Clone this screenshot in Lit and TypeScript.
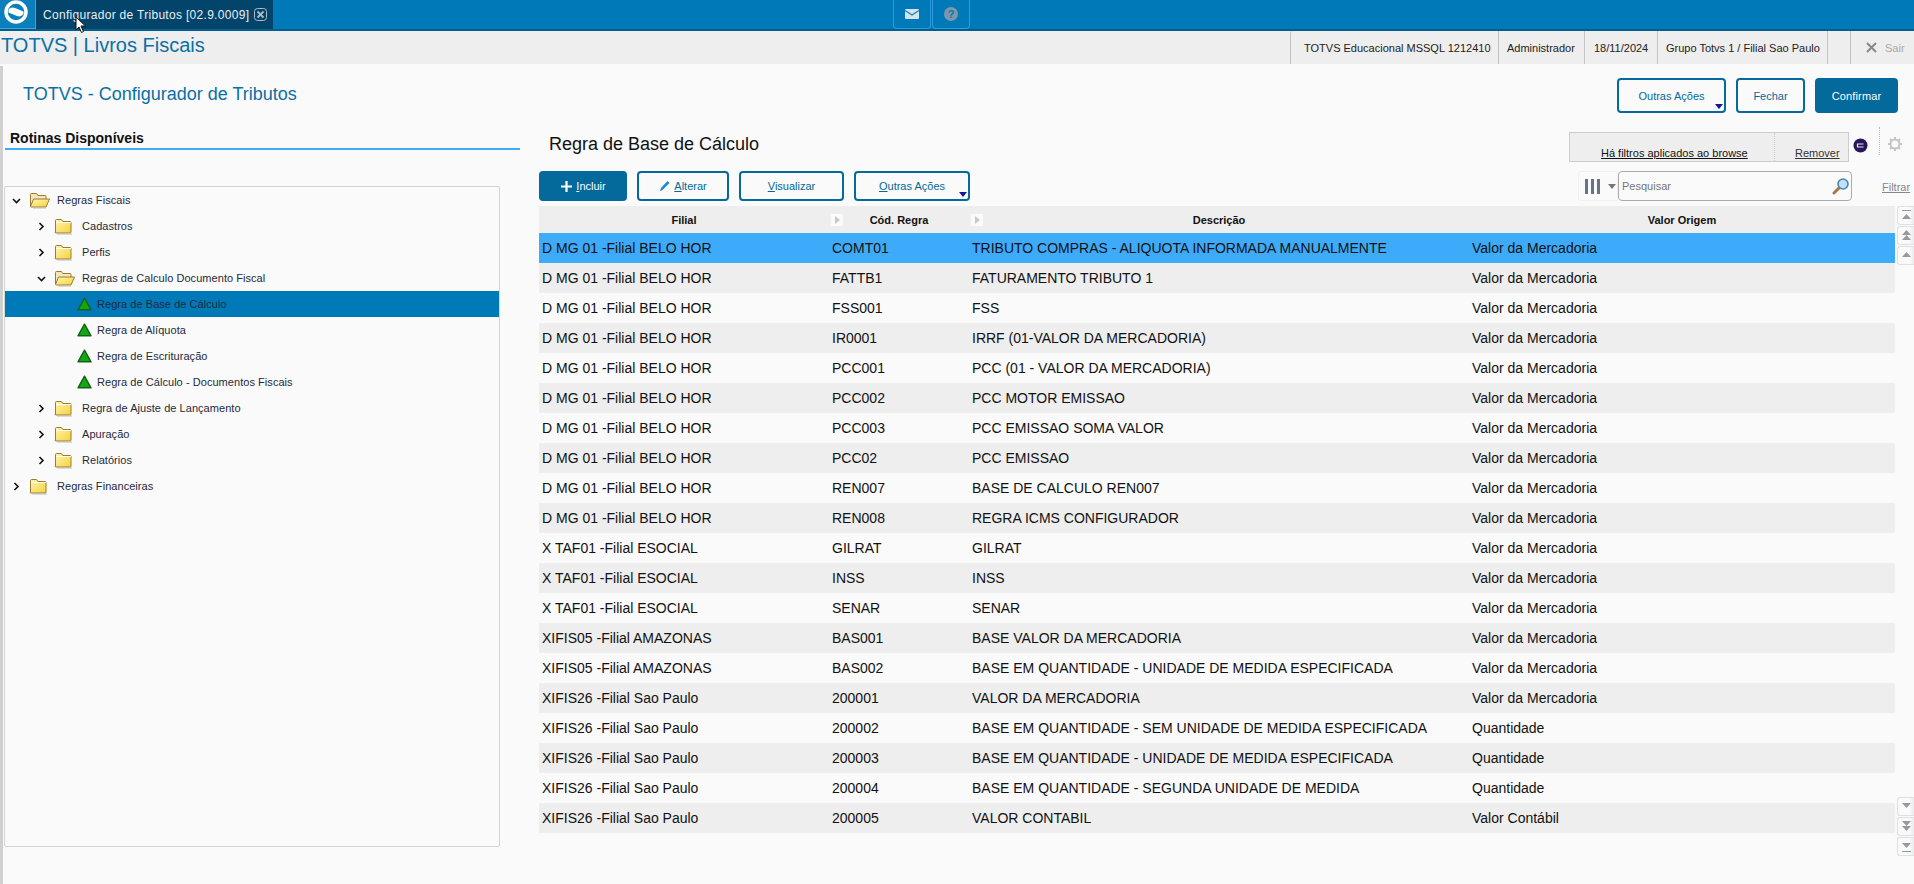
import { LitElement, html, css, svg } from "lit";
import { customElement } from "lit/decorators.js";

const rows: [string, string, string, string][] = [
  ["D MG 01 -Filial BELO HOR", "COMT01", "TRIBUTO COMPRAS - ALIQUOTA INFORMADA MANUALMENTE", "Valor da Mercadoria"],
  ["D MG 01 -Filial BELO HOR", "FATTB1", "FATURAMENTO TRIBUTO 1", "Valor da Mercadoria"],
  ["D MG 01 -Filial BELO HOR", "FSS001", "FSS", "Valor da Mercadoria"],
  ["D MG 01 -Filial BELO HOR", "IR0001", "IRRF (01-VALOR DA MERCADORIA)", "Valor da Mercadoria"],
  ["D MG 01 -Filial BELO HOR", "PCC001", "PCC (01 - VALOR DA MERCADORIA)", "Valor da Mercadoria"],
  ["D MG 01 -Filial BELO HOR", "PCC002", "PCC MOTOR EMISSAO", "Valor da Mercadoria"],
  ["D MG 01 -Filial BELO HOR", "PCC003", "PCC EMISSAO SOMA VALOR", "Valor da Mercadoria"],
  ["D MG 01 -Filial BELO HOR", "PCC02", "PCC EMISSAO", "Valor da Mercadoria"],
  ["D MG 01 -Filial BELO HOR", "REN007", "BASE DE CALCULO REN007", "Valor da Mercadoria"],
  ["D MG 01 -Filial BELO HOR", "REN008", "REGRA ICMS CONFIGURADOR", "Valor da Mercadoria"],
  ["X TAF01 -Filial ESOCIAL", "GILRAT", "GILRAT", "Valor da Mercadoria"],
  ["X TAF01 -Filial ESOCIAL", "INSS", "INSS", "Valor da Mercadoria"],
  ["X TAF01 -Filial ESOCIAL", "SENAR", "SENAR", "Valor da Mercadoria"],
  ["XIFIS05 -Filial AMAZONAS", "BAS001", "BASE VALOR DA MERCADORIA", "Valor da Mercadoria"],
  ["XIFIS05 -Filial AMAZONAS", "BAS002", "BASE EM QUANTIDADE - UNIDADE DE MEDIDA ESPECIFICADA", "Valor da Mercadoria"],
  ["XIFIS26 -Filial Sao Paulo", "200001", "VALOR DA MERCADORIA", "Valor da Mercadoria"],
  ["XIFIS26 -Filial Sao Paulo", "200002", "BASE EM QUANTIDADE - SEM UNIDADE DE MEDIDA ESPECIFICADA", "Quantidade"],
  ["XIFIS26 -Filial Sao Paulo", "200003", "BASE EM QUANTIDADE - UNIDADE DE MEDIDA ESPECIFICADA", "Quantidade"],
  ["XIFIS26 -Filial Sao Paulo", "200004", "BASE EM QUANTIDADE - SEGUNDA UNIDADE DE MEDIDA", "Quantidade"],
  ["XIFIS26 -Filial Sao Paulo", "200005", "VALOR CONTABIL", "Valor Contábil"],
];

type Kind = "closed" | "open" | "leaf";
const tree: { level: number; kind: Kind; label: string; sel?: boolean }[] = [
  { level: 0, kind: "open", label: "Regras Fiscais" },
  { level: 1, kind: "closed", label: "Cadastros" },
  { level: 1, kind: "closed", label: "Perfis" },
  { level: 1, kind: "open", label: "Regras de Calculo Documento Fiscal" },
  { level: 2, kind: "leaf", label: "Regra de Base de Cálculo", sel: true },
  { level: 2, kind: "leaf", label: "Regra de Alíquota" },
  { level: 2, kind: "leaf", label: "Regra de Escrituração" },
  { level: 2, kind: "leaf", label: "Regra de Cálculo - Documentos Fiscais" },
  { level: 1, kind: "closed", label: "Regra de Ajuste de Lançamento" },
  { level: 1, kind: "closed", label: "Apuração" },
  { level: 1, kind: "closed", label: "Relatórios" },
  { level: 0, kind: "closed", label: "Regras Financeiras" },
];

const folderDefs = svg`<defs><linearGradient id="fg" x1="0" y1="0" x2="1" y2="1"><stop offset="0" stop-color="#fff6b0"/><stop offset="1" stop-color="#f7d23c"/></linearGradient></defs>`;
const closedFolder = html`<svg class="ico c" width="19" height="17" viewBox="0 0 19 17">${folderDefs}
  <path d="M1.500 14V2.500q0-1 1-1h4.500q1 0 1.300 1l.5 1h7.200q1 0 1 1V14q0 1-1 1h-14q-1 0-1-1z" fill="url(#fg)" stroke="#9c7a32"/>
  <path d="M2 4.500h15" stroke="#fff" />
  <path d="M3 16h15" stroke="#bbb"/></svg>`;
const openFolder = html`<svg class="ico" width="22" height="17" viewBox="0 0 22 17">${folderDefs}
  <path d="M1.500 14V2.500q0-1 1-1h4.500q1 0 1.300 1l.5 1h7.200q1 0 1 1V7" fill="#f5e8b8" stroke="#9c7a32"/>
  <path d="M1.500 14.500 4.500 7h16l-3.500 8H2.500z" fill="url(#fg)" stroke="#9c7a32" stroke-linejoin="round"/>
  <path d="M4 16h13" stroke="#bbb"/></svg>`;
const leaf = html`<svg class="ico" width="15" height="14" viewBox="0 0 15 14">
  <path d="M7.500 1.200 14 12.800H1z" fill="#12a812" stroke="#16601c" stroke-width="1.400" stroke-linejoin="round"/></svg>`;
const chevOpen = html`<svg class="chev" width="9" height="9" viewBox="0 0 9 9"><path d="M1 3l3.500 3.500L8 3" fill="none" stroke="#111" stroke-width="1.600"/></svg>`;
const chevClosed = html`<svg class="chev" width="9" height="9" viewBox="0 0 9 9"><path d="M2.500 1L6 4.500 2.500 8" fill="none" stroke="#111" stroke-width="1.600"/></svg>`;

@customElement("app-root")
export class AppRoot extends LitElement {
  static styles = css`
    :host { display: block; position: relative; width: 1914px; height: 884px; overflow: hidden; background: #fafafa; font-family: "Liberation Sans", Arial, sans-serif; color: #111; }
    * { box-sizing: border-box; }

    .top { display: flex; height: 31px; background: #0079b8; border-bottom: 2px solid #035f8f; }
    .logo { width: 36px; height: 29px; background: #0a7fbc; border-right: 1px solid #3da6e0; border-bottom: 1px solid #3da6e0; overflow: hidden; }
    .logo svg { display: block; }
    .tab { width: 237px; height: 29px; background: #03446a; color: #e8eef2; display: flex; align-items: center; padding-left: 7px; gap: 5px; font-size: 12px; white-space: nowrap; letter-spacing: .3px; }
    .top-icons { display: flex; margin-left: 620px; gap: 1px; }
    .ti { width: 38px; height: 29px; border: 1px solid #2d9ae0; border-top: none; border-radius: 0 0 4px 4px; display: flex; align-items: center; justify-content: center; }
    .help { width: 14px; height: 14px; border-radius: 50%; background: #7e97a8; color: #0079b8; font-size: 11px; font-weight: 700; text-align: center; line-height: 14px; }

    .head { display: flex; height: 33px; background: #eee; }
    .brand { flex: 1; font-size: 20px; line-height: 29px; color: #0b70a6; padding-left: 1px; }
    .hc { display: flex; align-items: center; font-size: 11px; color: #222; border-left: 1px solid #c4c4c4; white-space: nowrap; }
    .hc.c1 { width: 208px; padding-left: 13px; border-radius: 3px 0 0 0; }
    .hc.c2 { width: 86px; padding-left: 8px; }
    .hc.c3 { width: 73px; padding-left: 9px; }
    .hc.c4 { width: 171px; padding-left: 8px; border-right: 1px solid #c4c4c4; }
    .hc.gap { width: 22px; border-left: none; }
    .hc.out { width: 64px; border-left: 1px solid #c4c4c4; padding-left: 15px; gap: 8px; color: #aaa; }

    .main { height: 820px; border-left: 3px solid #d0d0d0; margin-top: 2px; }
    .title-row { display: flex; justify-content: space-between; height: 54px; padding-top: 12px; padding-right: 16px; padding-left: 20px; }
    h1 { margin: 0; font-weight: 400; font-size: 18px; line-height: 21px; color: #0b6fa3; padding-top: 6px; }
    .actions { display: flex; gap: 10px; }
    .btn { position: relative; display: flex; flex: none; align-items: center; justify-content: center; gap: 3px; border: 2px solid #04699b; border-radius: 4px; background: #fafafa; color: #04699b; font-size: 11px; white-space: nowrap; }
    .btn.primary { background: #04699b; color: #fff; }
    .btn u { text-decoration: underline; text-underline-offset: 1px; }
    .btn.menu::after { content: ""; position: absolute; right: 1px; bottom: 2px; border: 4px solid transparent; border-top: 5px solid #15159a; border-bottom: none; }
    .a1 { width: 109px; height: 35px; }
    .a2 { width: 69px; height: 35px; }
    .a3 { width: 83px; height: 35px; letter-spacing: .15px; }

    .cols { display: flex; }
    .left { width: 536px; }
    .rot { margin-left: 2px; width: 515px; height: 30px; border-bottom: 2px solid #3dabf5; font-size: 14px; font-weight: 700; line-height: 17px; padding: 10px 0 0 5px; color: #111; }
    .tree { margin-left: 1px; margin-top: 36px; width: 496px; height: 661px; border: 1px solid #d4d4d4; border-radius: 2px; }
    .node { display: flex; align-items: center; height: 26px; font-size: 11px; color: #1e2a3a; letter-spacing: .05px; }
    .node.sel { background: #0079b8; }
    .chev { flex: none; }
    .ico { flex: none; }
    .ico.c { margin-right: 3px; }
    .l0 { padding-left: 7px; }
    .l1 { padding-left: 32px; }
    .l2 { padding-left: 72px; }
    .l0 .ico, .l1 .ico { margin-left: 8px; }
    .node .t { margin-left: 6px; }
    .l2 .t { margin-left: 5px; }

    .right { width: 1375px; }
    .r1 { display: flex; align-items: flex-start; height: 51px; }
    .rtitle { margin: 0; font-weight: 400; font-size: 18px; line-height: 21px; color: #111; padding: 14px 0 0 10px; width: 1030px; }
    .filter { display: flex; width: 280px; height: 30px; margin-top: 12px; background: #eee; border: 1px solid #ccc; font-size: 11px; color: #111; }
    .filter .f1 { width: 205px; padding-left: 31px; padding-top: 14px; text-decoration: underline; border-right: 1px dotted #ccc; white-space: nowrap; }
    .filter .f2 { flex: 1; padding-left: 20px; padding-top: 14px; text-decoration: underline; color: #333; }
    .dot { width: 15px; height: 15px; margin: 18px 0 0 4px; }
    .sep { width: 0; height: 28px; margin: 7px 0 0 11px; border-left: 1px dotted #bbb; }
    .gear { margin: 17px 0 0 8px; }

    .r2 { display: flex; height: 35px; gap: 10px; }
    .b { height: 30px; }
    .b1 { width: 88px; }
    .b2 { width: 92px; }
    .b3 { width: 105px; }
    .b4 { width: 116px; }
    .search { display: flex; flex: none; margin-left: 598px; height: 30px; }
    .cbtn { width: 40px; height: 30px; border: 1px solid #f0f0f0; border-radius: 3px 0 0 3px; display: flex; align-items: center; padding-left: 6px; gap: 8px; }
    .inp { width: 234px; height: 30px; border: 1px solid #aaa; border-radius: 4px; display: flex; align-items: center; justify-content: space-between; padding: 0 1px 0 3px; font-size: 11px; color: #777; background: #fafafa; }
    .fil { margin-left: 20px; font-size: 11px; color: #888; text-decoration: underline; line-height: 30px; padding-top: 1px; }

    .tw { display: flex; gap: 2px; }
    .table { width: 1356px; }
    .tr { display: grid; grid-template-columns: 290px 140px 500px 426px; height: 30px; align-items: center; font-size: 14px; white-space: nowrap; }
    .tr > div { padding-left: 3px; }
    .tr:nth-child(even) { background: #eee; }
    .tr.sel { background: #3dabf9; }
    .th { display: grid; grid-template-columns: 290px 140px 500px 426px; height: 27px; background: #eee; font-size: 11px; font-weight: 700; text-align: center; align-items: center; }
    .th > div { position: relative; line-height: 27px; padding-top: 1px; }
    .grip { position: absolute; left: 2px; top: 8px; width: 12px; height: 12px; background: #fafafa; }
    .grip::after { content: ""; position: absolute; left: 4px; top: 2px; border: 4px solid transparent; border-left: 5px solid #c8c8c8; border-right: none; }
    .sb { width: 17px; height: 650px; display: flex; flex-direction: column; justify-content: space-between; }
    .sg { display: flex; flex-direction: column; gap: 1px; }
    .sbtn { width: 17px; height: 19px; border: 1px solid #e0e0e0; border-right: none; border-radius: 3px 0 0 3px; background: linear-gradient(90deg, #fafafa 70%, #e6eef0); display: flex; align-items: center; justify-content: center; }
    .cursor { position: absolute; left: 75px; top: 16px; }
  `;

  private tri(dir: "up" | "down", n: number, bar: boolean) {
    const p = dir === "up" ? "M4.500 0 9 5H0z" : "M0 0h9L4.500 5z";
    return html`<div class="sbtn"><svg width="9" height="13" viewBox="0 0 9 13">
      ${bar && dir === "up" ? svg`<path d="M0 1.500h9" stroke="#999"/>` : ""}
      ${n === 2
        ? svg`<path d=${p} fill="#999" transform="translate(0,1)"/><path d=${p} fill="#999" transform="translate(0,6)"/>`
        : svg`<path d=${p} fill="#999" transform=${bar && dir === "up" ? "translate(0,5)" : "translate(0,3)"}/>`}
      ${bar && dir === "down" ? svg`<path d="M0 11.500h9" stroke="#999"/>` : ""}
    </svg></div>`;
  }

  render() {
    return html`
      <div class="top">
        <div class="logo">
          <svg width="35" height="28" viewBox="0 0 35 28">
            <circle cx="16" cy="12" r="10" fill="none" stroke="#fff" stroke-width="3.500"/>
            <path d="M8.500 9.500Q11 6.500 15 8l8.500 3.500V14Q21 17.500 17 16L8.500 12.500z" fill="#fff"/>
          </svg>
        </div>
        <div class="tab">
          <span>Configurador de Tributos [02.9.0009]</span>
          <svg width="13" height="13" viewBox="0 0 13 13"><rect x=".5" y=".5" width="12" height="12" rx="3" fill="none" stroke="#a9bcc8"/><path d="M3.500 3.500l6 6m0-6l-6 6" stroke="#a9bcc8" stroke-width="1.800"/></svg>
        </div>
        <div class="top-icons">
          <div class="ti"><svg width="14" height="11" viewBox="0 0 14 11"><rect width="14" height="10" rx="1" fill="#d5e3ee"/><path d="M0 1.500l7 4.500 7-4.500" fill="none" stroke="#1b88c4" stroke-width="1.300"/></svg></div>
          <div class="ti"><div class="help">?</div></div>
        </div>
      </div>

      <div class="head">
        <div class="brand">TOTVS | Livros Fiscais</div>
        <div class="hc c1">TOTVS Educacional MSSQL 1212410</div>
        <div class="hc c2">Administrador</div>
        <div class="hc c3">18/11/2024</div>
        <div class="hc c4">Grupo Totvs 1 / Filial Sao Paulo</div>
        <div class="hc gap"></div>
        <div class="hc out">
          <svg width="11" height="11" viewBox="0 0 11 11"><path d="M1 1l9 9m0-9l-9 9" stroke="#888" stroke-width="2"/></svg>
          <span>Sair</span>
        </div>
      </div>

      <div class="main">
        <div class="title-row">
          <h1>TOTVS - Configurador de Tributos</h1>
          <div class="actions">
            <div class="btn menu a1">Outras Ações</div>
            <div class="btn a2">Fechar</div>
            <div class="btn primary a3">Confirmar</div>
          </div>
        </div>
        <div class="cols">
          <div class="left">
            <div class="rot">Rotinas Disponíveis</div>
            <div class="tree">
              ${tree.map(
                (n) => html`<div class="node l${n.level} ${n.sel ? "sel" : ""}">
                  ${n.kind === "leaf" ? "" : n.kind === "open" ? chevOpen : chevClosed}
                  ${n.kind === "leaf" ? leaf : n.kind === "open" ? openFolder : closedFolder}
                  <span class="t">${n.label}</span>
                </div>`
              )}
            </div>
          </div>
          <div class="right">
            <div class="r1">
              <h2 class="rtitle">Regra de Base de Cálculo</h2>
              <div class="filter">
                <div class="f1">Há filtros aplicados ao browse</div>
                <div class="f2">Remover</div>
              </div>
              <svg class="dot" viewBox="0 0 15 15"><circle cx="7.500" cy="7.500" r="7" fill="#2a1458"/><path d="M10.500 6h-6v3h6" stroke="#e8e8f0" stroke-width="1.200" fill="none"/></svg>
              <div class="sep"></div>
              <svg class="gear" width="14" height="14" viewBox="0 0 14 14"><circle cx="7" cy="7" r="4.500" fill="none" stroke="#c4c4c4" stroke-width="2"/><path d="M7 0v3M7 11v3M0 7h3M11 7h3M2 2l2 2M10 10l2 2M12 2l-2 2M4 10l-2 2" stroke="#c4c4c4" stroke-width="2"/></svg>
            </div>
            <div class="r2">
              <div class="btn primary b b1"><svg width="13" height="13" viewBox="0 0 13 13"><path d="M6.500 1v11M1 6.500h11" stroke="#fff" stroke-width="2.200"/></svg><span><u>I</u>ncluir</span></div>
              <div class="btn b b2"><svg width="12" height="12" viewBox="0 0 12 12"><path d="M1 11l1-3 6.500-7 2 2L3.500 10z" fill="#1f8ad0"/></svg><span><u>A</u>lterar</span></div>
              <div class="btn b b3"><span><u>V</u>isualizar</span></div>
              <div class="btn menu b b4"><span><u>O</u>utras Ações</span></div>
              <div class="search">
                <div class="cbtn">
                  <svg width="15" height="15" viewBox="0 0 15 15"><path d="M0 0h3v15H0zM6 0h3v15H6zM12 0h3v15h-3z" fill="#6a7386"/></svg>
                  <svg width="8" height="5" viewBox="0 0 8 5"><path d="M0 0h8L4 5z" fill="#777"/></svg>
                </div>
                <div class="inp"><span>Pesquisar</span>
                  <svg width="18" height="18" viewBox="0 0 18 18"><circle cx="11" cy="7" r="5" fill="#bfe0f5" stroke="#4a86b0" stroke-width="1.600"/><path d="M7 11l-5 5" stroke="#a07a4a" stroke-width="3" stroke-linecap="round"/></svg>
                </div>
              </div>
              <div class="fil">Filtrar</div>
            </div>
            <div class="tw">
              <div class="table">
                <div class="th">
                  <div>Filial</div>
                  <div><span class="grip"></span>Cód. Regra</div>
                  <div><span class="grip"></span>Descrição</div>
                  <div>Valor Origem</div>
                </div>
                <div>
                  ${rows.map(
                    (r, i) => html`<div class="tr ${i === 0 ? "sel" : ""}">
                      <div>${r[0]}</div><div>${r[1]}</div><div>${r[2]}</div><div>${r[3]}</div>
                    </div>`
                  )}
                </div>
              </div>
              <div class="sb">
                <div class="sg">${this.tri("up", 1, true)}${this.tri("up", 2, false)}${this.tri("up", 1, false)}</div>
                <div class="sg">${this.tri("down", 1, false)}${this.tri("down", 2, false)}${this.tri("down", 1, true)}</div>
              </div>
            </div>
          </div>
        </div>
      </div>
      <svg class="cursor" width="12" height="18" viewBox="0 0 12 18"><path d="M1 1v13l3-3 2.500 5.500 2-1L6 10h4.500z" fill="#fff" stroke="#111"/></svg>
    `;
  }
}
